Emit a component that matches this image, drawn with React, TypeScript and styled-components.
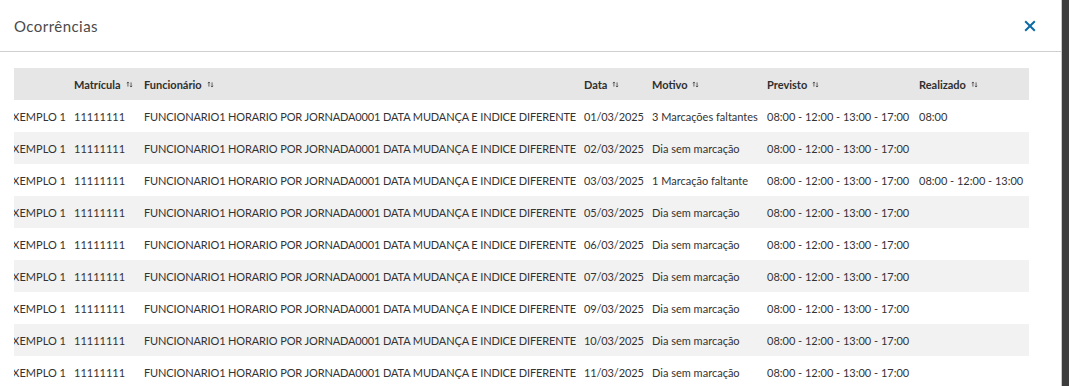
import React, { useEffect, useRef } from 'react'
import { styled, createGlobalStyle } from 'styled-components'

const GlobalStyle = createGlobalStyle`
  html, body {
    margin: 0;
    padding: 0;
    height: 100%;
    overflow: hidden;
  }
  body {
    background: #3d3d3d;
    font-family: Lato, 'Noto Sans', sans-serif;
  }
`

type Occurrence = {
  empresa: string
  matricula: string
  funcionario: string
  data: string
  motivo: string
  previsto: string
  realizado: string
}

const PREVISTO = '08:00 - 12:00 - 13:00 - 17:00'
const FUNC = 'FUNCIONARIO1 HORARIO POR JORNADA0001 DATA MUDANÇA E INDICE DIFERENTE'

const rows: Occurrence[] = [
  { data: '01/03/2025', motivo: '3 Marcações faltantes', realizado: '08:00' },
  { data: '02/03/2025', motivo: 'Dia sem marcação', realizado: '' },
  { data: '03/03/2025', motivo: '1 Marcação faltante', realizado: '08:00 - 12:00 - 13:00' },
  { data: '05/03/2025', motivo: 'Dia sem marcação', realizado: '' },
  { data: '06/03/2025', motivo: 'Dia sem marcação', realizado: '' },
  { data: '07/03/2025', motivo: 'Dia sem marcação', realizado: '' },
  { data: '09/03/2025', motivo: 'Dia sem marcação', realizado: '' },
  { data: '10/03/2025', motivo: 'Dia sem marcação', realizado: '' },
  { data: '11/03/2025', motivo: 'Dia sem marcação', realizado: '' },
].map((r) => ({
  ...r,
  empresa: 'EXEMPLO 1',
  matricula: '11111111',
  funcionario: FUNC,
  previsto: PREVISTO,
}))

// the first column is scrolled partly out of view, as in the original grid
const columns = [
  { key: 'empresa', label: '', width: 68, tight: false },
  { key: 'matricula', label: 'Matrícula', width: 70, tight: false },
  { key: 'funcionario', label: 'Funcionário', width: 440, tight: true },
  { key: 'data', label: 'Data', width: 68, tight: true },
  { key: 'motivo', label: 'Motivo', width: 115, tight: false },
  { key: 'previsto', label: 'Previsto', width: 152, tight: false },
  { key: 'realizado', label: 'Realizado', width: 115, tight: false },
] as const

const SortIcon = () => (
  <SortSvg viewBox={'0 0 8 8'} width={7} height={7}>
    <path d={'M2.2 6.4V1.2M1 2.5L2.2 1.1L3.4 2.5'} />
    <path d={'M5.8 1.6V6.8M4.6 5.5L5.8 6.9L7 5.5'} />
  </SortSvg>
)

const App = () => {
  const scrollRef = useRef<HTMLDivElement>(null)

  useEffect(() => {
    if (scrollRef.current) scrollRef.current.scrollLeft = 13
  }, [])

  return (
    <>
      <GlobalStyle />
      <Modal>
        <ModalHeader>
          <ModalTitle>{'Ocorrências'}</ModalTitle>
          <CloseButton type={'button'} aria-label={'Fechar'}>
            <svg viewBox={'0 0 12 12'} width={12} height={12}>
              <path d={'M1.2 1.2L10.8 10.8M10.8 1.2L1.2 10.8'} />
            </svg>
          </CloseButton>
        </ModalHeader>

        <ModalBody>
          <TableScroll ref={scrollRef}>
            <Table>
              <colgroup>
                {columns.map((c) => (
                  <col key={c.key} style={{ width: c.width }} />
                ))}
              </colgroup>
              <thead>
                <tr>
                  {columns.map((c) => (
                    <HeadCell key={c.key}>
                      {c.label && (
                        <HeadLabel>
                          {c.label}
                          <SortIcon />
                        </HeadLabel>
                      )}
                    </HeadCell>
                  ))}
                </tr>
              </thead>
              <tbody>
                {rows.map((r, idx) => (
                  <BodyRow key={r.data} $striped={idx % 2 === 1}>
                    {columns.map((c) => (
                      <Cell key={c.key} $tight={c.tight}>
                        {r[c.key]}
                      </Cell>
                    ))}
                  </BodyRow>
                ))}
              </tbody>
            </Table>
          </TableScroll>
        </ModalBody>
      </Modal>
    </>
  )
}

const Modal = styled.div`
  width: 1062px;
  height: 100vh;
  background: #ffffff;
  border-right: 1px solid #c9c9c9;
  box-sizing: border-box;
  display: flex;
  flex-direction: column;
`

const ModalHeader = styled.div`
  height: 52px;
  flex-shrink: 0;
  box-sizing: border-box;
  display: flex;
  align-items: center;
  justify-content: space-between;
  padding: 0 25px 0 14px;
  border-bottom: 1px solid #cfcfcf;
`

const ModalTitle = styled.h1`
  margin: 0;
  font-size: 15px;
  font-weight: 400;
  color: #4a4a4a;
  letter-spacing: 0.45px;
`

const CloseButton = styled.button`
  border: none;
  background: none;
  padding: 0;
  width: 12px;
  height: 12px;
  display: flex;
  cursor: pointer;

  svg path {
    stroke: #0c6aa6;
    stroke-width: 2;
    fill: none;
  }
`

const ModalBody = styled.div`
  padding: 16px 32px 0 14px;
`

const TableScroll = styled.div`
  width: 1015px;
  overflow-x: hidden;
`

const Table = styled.table`
  width: 1028px;
  table-layout: fixed;
  border-collapse: collapse;
  font-size: 11px;
  color: #333333;
`

const HeadCell = styled.th`
  height: 32px;
  padding: 0 5px;
  background: #e6e6e6;
  text-align: left;
  font-weight: 700;
  color: #2f2f2f;
  white-space: nowrap;
  overflow: hidden;
`

const HeadLabel = styled.span`
  display: inline-flex;
  align-items: center;
  gap: 5px;
`

const SortSvg = styled.svg`
  path {
    stroke: #4f4f4f;
    stroke-width: 1;
    fill: none;
  }
`

const BodyRow = styled.tr<{ $striped: boolean }>`
  height: 32px;
  background: ${({ $striped }) => ($striped ? '#f2f2f2' : '#ffffff')};
`

const Cell = styled.td<{ $tight: boolean }>`
  padding: 0 5px;
  white-space: nowrap;
  overflow: hidden;
  letter-spacing: ${({ $tight }) => ($tight ? '-0.13px' : '0')};
`

export default App
